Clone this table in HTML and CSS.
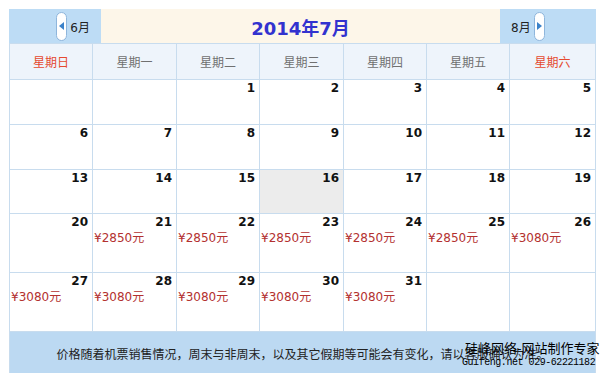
FILE: index.html
```html
<!DOCTYPE html>
<html lang="zh">
<head>
<meta charset="utf-8">
<link rel="stylesheet" href="styles.css">
</head>
<body>
<div class="cal">
  <div class="top">
    <div class="nav prev"><span class="pill"><svg width="6" height="8" viewBox="0 0 6 8"><path d="M5 0 L0 4 L5 8 Z" fill="#3b82c9"/></svg></span><span>6月</span></div>
    <div class="title">2014年7月</div>
    <div class="nav next"><span>8月</span><span class="pill"><svg width="6" height="8" viewBox="0 0 6 8"><path d="M1 0 L6 4 L1 8 Z" fill="#3b82c9"/></svg></span></div>
  </div>
  <div class="grid">
    <div class="wd we">星期日</div>
    <div class="wd">星期一</div>
    <div class="wd">星期二</div>
    <div class="wd">星期三</div>
    <div class="wd">星期四</div>
    <div class="wd">星期五</div>
    <div class="wd we">星期六</div>

    <div class="d"></div>
    <div class="d"></div>
    <div class="d"><b>1</b></div>
    <div class="d"><b>2</b></div>
    <div class="d"><b>3</b></div>
    <div class="d"><b>4</b></div>
    <div class="d"><b>5</b></div>

    <div class="d"><b>6</b></div>
    <div class="d"><b>7</b></div>
    <div class="d"><b>8</b></div>
    <div class="d"><b>9</b></div>
    <div class="d"><b>10</b></div>
    <div class="d"><b>11</b></div>
    <div class="d"><b>12</b></div>

    <div class="d"><b>13</b></div>
    <div class="d"><b>14</b></div>
    <div class="d"><b>15</b></div>
    <div class="d today"><b>16</b></div>
    <div class="d"><b>17</b></div>
    <div class="d"><b>18</b></div>
    <div class="d"><b>19</b></div>

    <div class="d"><b>20</b></div>
    <div class="d"><b>21</b><span class="p">¥2850元</span></div>
    <div class="d"><b>22</b><span class="p">¥2850元</span></div>
    <div class="d"><b>23</b><span class="p">¥2850元</span></div>
    <div class="d"><b>24</b><span class="p">¥2850元</span></div>
    <div class="d"><b>25</b><span class="p">¥2850元</span></div>
    <div class="d"><b>26</b><span class="p">¥3080元</span></div>

    <div class="d"><b>27</b><span class="p">¥3080元</span></div>
    <div class="d"><b>28</b><span class="p">¥3080元</span></div>
    <div class="d"><b>29</b><span class="p">¥3080元</span></div>
    <div class="d"><b>30</b><span class="p">¥3080元</span></div>
    <div class="d"><b>31</b><span class="p">¥3080元</span></div>
    <div class="d"></div>
    <div class="d"></div>

    <div class="foot">价格随着机票销售情况，周末与非周末，以及其它假期等可能会有变化，请以客服确认为准。</div>
  </div>
  <div class="mark">
    <div class="m1">硅峰网络-网站制作专家</div>
    <div class="m2">Guifeng.net 029-62221182</div>
  </div>
</div>
</body>
</html>
```
FILE: styles.css
```css
html, body {
  margin: 0;
  padding: 0;
  background: #fff;
}
body {
  padding: 9px 0 0 9px;
  font-family: "DejaVu Sans", "Noto Sans CJK SC", sans-serif;
}
.cal {
  position: relative;
  width: 587px;
}
.top {
  display: flex;
  height: 34px;
}
.nav {
  display: flex;
  align-items: center;
  background: #bddcf5;
  font-size: 12px;
  color: #222;
}
.prev {
  width: 92px;
  justify-content: flex-end;
  padding-right: 11px;
  box-sizing: border-box;
  gap: 3px;
}
.next {
  width: 96px;
  padding-left: 11px;
  box-sizing: border-box;
  gap: 3px;
}
.pill {
  width: 9px;
  height: 27px;
  border: 1px solid #8fb6dc;
  border-radius: 6px;
  background: #fff;
  display: flex;
  align-items: center;
  justify-content: center;
}
.title {
  flex: 1;
  background: #fdf6e9;
  display: flex;
  align-items: center;
  justify-content: center;
  font-size: 18px;
  font-weight: bold;
  color: #3232cf;
  padding-top: 1px;
}
.grid {
  display: grid;
  grid-template-columns: 82px 83px 82px 83px 82px 82px 85px;
  grid-template-rows: 35px 44px 44px 43px 58px 58px 41px;
  gap: 1px;
  background: #c8dcee;
  border: 1px solid #c8dcee;
  border-bottom: 0;
}
.wd {
  background: #eef4fb;
  color: #707070;
  font-size: 12px;
  display: flex;
  align-items: center;
  justify-content: center;
  font-family: "Noto Sans CJK SC", sans-serif;
}
.wd.we {
  color: #e5492f;
}
.d {
  background: #fff;
  display: flex;
  flex-direction: column;
  padding-top: 1px;
}
.d.today {
  background: #ececec;
}
.d b {
  align-self: flex-end;
  padding-right: 4px;
  font-size: 12px;
  line-height: 15px;
  color: #111;
}
.p {
  padding-left: 1px;
  font-size: 12px;
  line-height: 16px;
  color: #b3312f;
}
.foot {
  grid-column: 1 / -1;
  background: #bcd9f2;
  display: flex;
  align-items: center;
  justify-content: center;
  font-size: 12px;
  color: #222;
  font-family: "Noto Sans CJK SC", sans-serif;
  padding-top: 2px;
}
.mark {
  position: absolute;
  left: 453px;
  top: 331px;
  color: #000;
  white-space: nowrap;
  display: flex;
  flex-direction: column;
}
.m1 {
  font-size: 13px;
  line-height: 16px;
  height: 16px;
  font-family: "Noto Sans CJK SC", sans-serif;
  padding-left: 3px;
}
.m2 {
  margin-top: 1px;
  font-size: 10px;
  line-height: 12px;
  height: 12px;
  letter-spacing: -0.45px;
  font-family: "Liberation Mono", monospace;
}
```
